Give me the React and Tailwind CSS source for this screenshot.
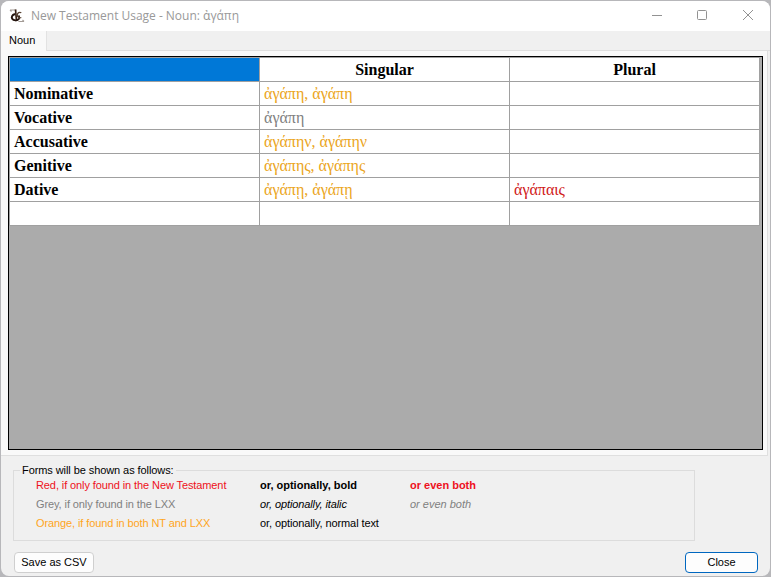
const rows = [
  { name: "Nominative", singular: "ἀγάπη, ἀγάπη", color: "text-[#eba521]" },
  { name: "Vocative", singular: "ἀγάπη", color: "text-[#808080]" },
  { name: "Accusative", singular: "ἀγάπην, ἀγάπην", color: "text-[#eba521]" },
  { name: "Genitive", singular: "ἀγάπης, ἀγάπης", color: "text-[#eba521]" },
  { name: "Dative", singular: "ἀγάπῃ, ἀγάπῃ", color: "text-[#eba521]", plural: "ἀγάπαις" },
  { name: "", singular: "", color: "" },
];

const cell = "h-6 border-r border-b border-[#a0a0a0] bg-white px-1 leading-[24px] whitespace-nowrap";

function AppIcon() {
  return (
    <svg className="h-4 w-4 shrink-0" viewBox="0 0 16 16" fill="none">
      <path d="M1 2h6.5M2.5 3.5 1 2M9.500 13.500H15M13.500 12l1.500 1.500" stroke="#a39b95" strokeWidth="1.100" />
      <path d="M6.500 1.500 7.500 13" stroke="#3a2418" strokeWidth="1.700" />
      <path d="M6 6C3 7 2.200 9 3.200 10.800c1.200 2 5.300 2.200 6.800 0 .7-1.100.3-2.200-.5-3.300" stroke="#24140e" strokeWidth="2" />
      <path d="M12.300 4.800C10.500 3.500 8.300 5 8.300 7c0 2.200 2 3.500 4 2.500" stroke="#5b4435" strokeWidth="1.300" />
    </svg>
  );
}

function TitleBar() {
  return (
    <header className="flex h-[30px] shrink-0 items-center bg-white pl-2">
      <AppIcon />
      <h1 className="ml-[6px] grow font-['Open_Sans','Noto_Sans',sans-serif] text-[12px] leading-[16px] tracking-[-0.02px] text-[#999]">
        New Testament Usage - Noun: ἀγάπη
      </h1>
      <svg className="h-[30px] w-[138px] shrink-0" viewBox="0 0 138 30" fill="none" stroke="#929292">
        <path d="M20 14.500h10" />
        <rect x="65.500" y="9.500" width="9" height="9" rx="1" />
        <path d="m111 9 10 10m0-10-10 10" />
      </svg>
    </header>
  );
}

function Declension() {
  return (
    <div className="h-[394px] w-[755px] border border-black bg-[#ababab] font-['Liberation_Serif',serif] text-[16px]">
      <div className="grid w-[751px] grid-cols-[250px_250px_250px] border-t border-l border-[#a0a0a0]">
        <div className={"h-6 border-r border-b border-[#a0a0a0] bg-[#0078d7]"} />
        <div className={cell + " text-center font-bold"}>Singular</div>
        <div className={cell + " text-center font-bold"}>Plural</div>
        {rows.map((r, i) => (
          <div key={i} className="contents">
            <div className={cell + " font-bold"}>{r.name}</div>
            <div className={cell + " " + r.color}>{r.singular}</div>
            <div className={cell + " text-[#d01818]"}>{r.plural}</div>
          </div>
        ))}
      </div>
    </div>
  );
}

function Legend() {
  return (
    <fieldset className="ml-3 h-[78px] w-[682px] border border-[#dcdcdc] pl-[22px]">
      <legend className="-ml-[16px] h-[14px] px-[2px] leading-[14px] tracking-[-0.08px]">Forms will be shown as follows:</legend>
      <div className="-mt-px grid grid-cols-[224px_150px_150px] auto-rows-[19px] leading-[19px] whitespace-nowrap">
        <span className="text-[#ee1020]"><span className="tracking-[-0.1px]">Red, if only found in the New Testament</span></span>
        <span className="font-bold">or, optionally, bold</span>
        <span className="font-bold text-[#ee1020]">or even both</span>
        <span className="tracking-[-0.1px] text-[#808080]">Grey, if only found in the LXX</span>
        <span className="tracking-[-0.1px] italic">or, optionally, italic</span>
        <span className="text-[#808080] italic">or even both</span>
        <span className="tracking-[-0.1px] text-[#ffa51c]">Orange, if found in both NT and LXX</span>
        <span className="tracking-[-0.1px]">or, optionally, normal text</span>
      </div>
    </fieldset>
  );
}

export default function App() {
  return (
    <div className="h-[577px] w-[771px] overflow-hidden bg-[#b7b7ba] pt-px pl-px font-['Liberation_Sans',sans-serif] text-[11px] text-black">
      <div className="flex h-[575px] w-[769px] flex-col overflow-hidden rounded-[8px] bg-[#f0f0f0]">
        <TitleBar />
        <div className="flex h-5 shrink-0">
          <div className="w-[46px] border-r border-[#e2e2e2] bg-[#f9f9f9] pl-2 leading-[19px]">Noun</div>
          <div className="grow border-b border-[#dfdfdf]" />
        </div>
        <main className="h-[405px] w-[767px] shrink-0 border-r border-b border-[#dfdfdf] bg-[#f9f9f9] pt-[5px] pl-[7px]">
          <Declension />
        </main>
        <section className="pt-[7px]">
          <Legend />
        </section>
        <footer className="mt-[11px] flex justify-between pr-[12px] pl-[13px]">
          <button className="h-[21px] w-[80px] rounded-[4px] border border-[#cfcfcf] bg-[#fdfdfd] leading-[19px]">Save as CSV</button>
          <button className="h-[21px] w-[73px] rounded-[4px] border border-[#0067c0] bg-[#fdfdfd] leading-[19px]">Close</button>
        </footer>
      </div>
    </div>
  );
}
